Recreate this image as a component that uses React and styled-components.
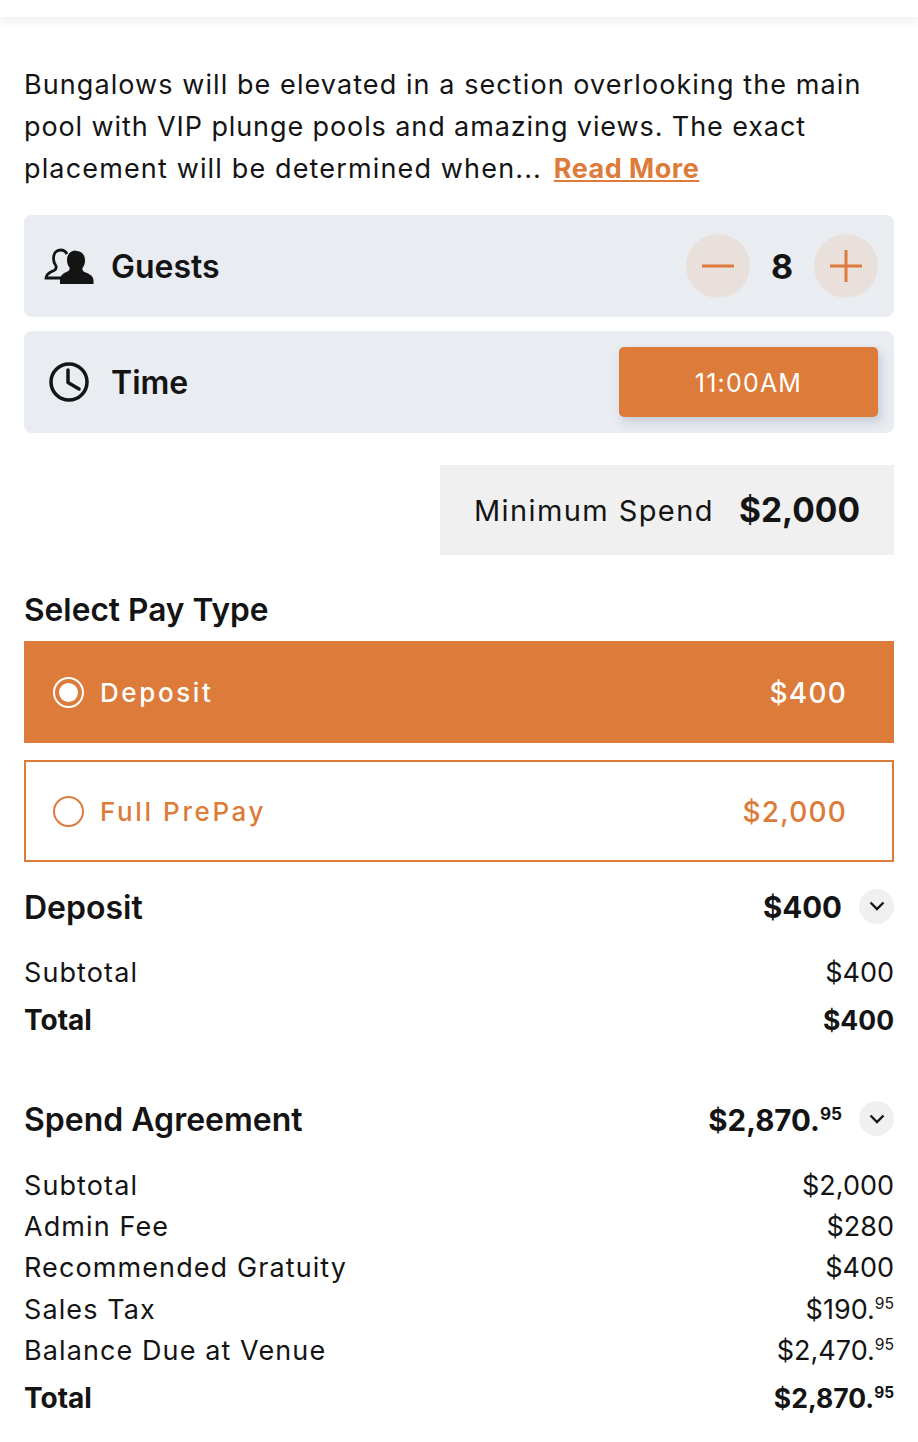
import styled, { createGlobalStyle } from "styled-components";

const orange = "#dd7b3a";
const ink = "#141414";

const Global = createGlobalStyle`
  html, body { margin: 0; padding: 0; background: #fff; }
  body { font-family: Inter, "Noto Sans", "Liberation Sans", sans-serif; color: ${ink}; }
  * { box-sizing: border-box; }
`;

const Page = styled.div`
  width: 918px;
  height: 1442px;
  overflow: hidden;
`;
const TopBar = styled.div`
  height: 17px;
  background: #fff;
  box-shadow: 0 5px 10px rgba(0, 0, 0, 0.06);
`;
const Content = styled.div`
  padding: 47px 24px 0;
`;
const Intro = styled.p`
  margin: 0;
  font-size: 27px;
  line-height: 42px;
  white-space: nowrap;
  a {
    margin-left: 3px;
    color: ${orange};
    font-weight: 700;
    letter-spacing: 0.5px;
    text-decoration: underline;
  }
`;
const IntroLine = styled.span`
  display: block;
  letter-spacing: ${(p) => p.$spacing}px;
`;
const Row = styled.div`
  height: 102px;
  margin-top: ${(p) => p.$top}px;
  padding: 0 16px 0 20px;
  display: flex;
  align-items: center;
  justify-content: space-between;
  background: #e9ecf1;
  border-radius: 8px;
`;
const RowLabel = styled.div`
  display: flex;
  align-items: center;
  gap: 17px;
  font-size: 32px;
  font-weight: 600;
`;
const IconSlot = styled.div`
  width: 50px;
  display: flex;
  justify-content: center;
  svg {
    display: block;
  }
`;
const Stepper = styled.div`
  display: flex;
  align-items: center;
  font-size: 34px;
  font-weight: 700;
  span {
    width: 64px;
    text-align: center;
  }
`;
const RoundBtn = styled.div`
  width: 64px;
  height: 64px;
  border-radius: 50%;
  background: #e9e0dc;
  display: flex;
  align-items: center;
  justify-content: center;
`;
const TimeBtn = styled.div`
  width: 259px;
  height: 70px;
  padding-top: 1px;
  display: flex;
  align-items: center;
  justify-content: center;
  background: ${orange};
  color: #fff;
  border-radius: 5px;
  font-size: 25px;
  letter-spacing: 1.2px;
  box-shadow: 3px 5px 10px rgba(90, 110, 140, 0.25);
`;
const MinSpend = styled.div`
  width: 454px;
  height: 90px;
  margin: 32px 0 0 auto;
  padding: 0 34px;
  display: flex;
  align-items: center;
  justify-content: space-between;
  background: #f0f0f0;
  font-size: 29px;
  letter-spacing: 1.4px;
  strong {
    font-size: 33.5px;
    font-weight: 700;
    letter-spacing: 0;
  }
`;
const SectionTitle = styled.h2`
  margin: 35px 0 11px;
  font-size: 31.7px;
  line-height: 40px;
  font-weight: 600;
`;
const PayOption = styled.div`
  height: 102px;
  margin-bottom: 17px;
  padding: 1px ${(p) => (p.$active ? 47 : 45)}px 0 ${(p) => (p.$active ? 29 : 27)}px;
  display: flex;
  align-items: center;
  justify-content: space-between;
  background: ${(p) => (p.$active ? orange : "#fff")};
  color: ${(p) => (p.$active ? "#fff" : orange)};
  border: ${(p) => (p.$active ? "none" : `2px solid ${orange}`)};
  font-size: 28px;
  font-weight: 500;
  letter-spacing: 1.2px;
`;
const PayName = styled.div`
  display: flex;
  align-items: center;
  gap: 16px;
  margin-top: -1px;
  font-size: 26px;
  font-weight: 500;
  letter-spacing: 2.6px;
`;
const Radio = styled.div`
  width: 31px;
  height: 31px;
  border-radius: 50%;
  border: 2px solid currentColor;
  padding: 4px;
  &::after {
    content: "";
    display: ${(p) => (p.$on ? "block" : "none")};
    width: 100%;
    height: 100%;
    border-radius: 50%;
    background: currentColor;
  }
`;
const SummaryHead = styled.div`
  height: 40px;
  margin-top: ${(p) => p.$top}px;
  margin-bottom: 25px;
  display: flex;
  align-items: center;
  justify-content: space-between;
  font-size: 32px;
  font-weight: 600;
`;
const HeadAmount = styled.div`
  display: flex;
  align-items: center;
  gap: 17px;
  font-size: 29.5px;
  font-weight: 700;
`;
const Chevron = styled.div`
  width: 35px;
  height: 35px;
  border-radius: 50%;
  background: #f0f0f0;
  display: flex;
  align-items: center;
  justify-content: center;
  margin-top: -2px;
`;
const Line = styled.div`
  height: 41.3px;
  display: flex;
  align-items: center;
  justify-content: space-between;
  font-size: 27px;
  letter-spacing: 1.1px;
`;
const TotalLine = styled(Line)`
  margin-top: 6px;
  font-size: 28px;
  font-weight: 700;
  letter-spacing: 0;
`;
const Amount = styled.div`
  font-size: ${(p) => (p.$small ? 26.5 : 27)}px;
  letter-spacing: 0;
`;
const Cents = styled.sup`
  font-size: 0.58em;
  line-height: 0;
  vertical-align: baseline;
  position: relative;
  top: -0.62em;
`;

const Money = ({ v, c, small }) => (
  <Amount $small={small}>
    {v}
    {c && <Cents>{c}</Cents>}
  </Amount>
);

const GuestsIcon = () => (
  <svg width="50" height="36" viewBox="0 0 50 36">
    <path
      d="M18 30H2c0-4 4-6 8-7.500 2-1 2.500-2.500 2-4.500-1.500-2-2.500-4-2.500-7.500C9.500 5 12.500 2 16.500 2c2.500 0 5 1 6.500 4"
      fill="none"
      stroke={ink}
      strokeWidth="2.800"
    />
    <path
      d="M32 2.500c-5.500 0-9 3.500-9 9.500 0 3 1 5.500 2.500 7.500 .5 2-.5 3.500-3 4.500-3.500 1.500-6.500 3.500-6.500 8v4h33.500v-3.500c0-4-3.500-6.500-8-8-2.500-1-3.500-2.500-3-4.500 1.500-2 2.500-4.500 2.500-7.500 0-6-3.500-9.500-9-9.500z"
      fill={ink}
    />
  </svg>
);

const ClockIcon = () => (
  <svg width="40" height="40" viewBox="0 0 40 40" fill="none" stroke={ink} strokeWidth="3.500" strokeLinecap="round" strokeLinejoin="round">
    <circle cx="20" cy="20" r="18" />
    <path d="M19 8v12.500l11 6.500" />
  </svg>
);

const MinusIcon = () => (
  <svg width="32" height="32" viewBox="0 0 32 32">
    <rect y="14.500" width="32" height="3" fill={orange} />
  </svg>
);

const PlusIcon = () => (
  <svg width="32" height="32" viewBox="0 0 32 32">
    <rect y="14.500" width="32" height="3" fill={orange} />
    <rect x="14.500" width="3" height="32" fill={orange} />
  </svg>
);

const ChevronIcon = () => (
  <svg width="16" height="10" viewBox="0 0 16 10" fill="none" stroke={ink} strokeWidth="2.400">
    <path d="M1.500 1.500L8 8l6.500-6.500" />
  </svg>
);

const App = () => {
  return (
    <Page>
      <Global />
      <TopBar />
      <Content>
        <Intro>
          <IntroLine $spacing={1.08}>Bungalows will be elevated in a section overlooking the main</IntroLine>
          <IntroLine $spacing={0.9}>pool with VIP plunge pools and amazing views. The exact</IntroLine>
          <IntroLine $spacing={1.15}>
            placement will be determined when... <a href="#more">Read More</a>
          </IntroLine>
        </Intro>
        <Row $top={25}>
          <RowLabel>
            <IconSlot>
              <GuestsIcon />
            </IconSlot>
            Guests
          </RowLabel>
          <Stepper>
            <RoundBtn>
              <MinusIcon />
            </RoundBtn>
            <span>8</span>
            <RoundBtn>
              <PlusIcon />
            </RoundBtn>
          </Stepper>
        </Row>
        <Row $top={14}>
          <RowLabel>
            <IconSlot>
              <ClockIcon />
            </IconSlot>
            Time
          </RowLabel>
          <TimeBtn>11:00AM</TimeBtn>
        </Row>
        <MinSpend>
          Minimum Spend
          <strong>$2,000</strong>
        </MinSpend>
        <SectionTitle>Select Pay Type</SectionTitle>
        <PayOption $active>
          <PayName>
            <Radio $on />
            Deposit
          </PayName>
          <div>$400</div>
        </PayOption>
        <PayOption>
          <PayName>
            <Radio />
            Full PrePay
          </PayName>
          <div>$2,000</div>
        </PayOption>
        <SummaryHead $top={25}>
          Deposit
          <HeadAmount>
            <div>$400</div>
            <Chevron>
              <ChevronIcon />
            </Chevron>
          </HeadAmount>
        </SummaryHead>
        <Line>
          Subtotal
          <Money v="$400" />
        </Line>
        <TotalLine>
          Total
          <Money v="$400" small />
        </TotalLine>
        <SummaryHead $top={59}>
          Spend Agreement
          <HeadAmount>
            <div>
              $2,870.<Cents>95</Cents>
            </div>
            <Chevron>
              <ChevronIcon />
            </Chevron>
          </HeadAmount>
        </SummaryHead>
        <Line>
          Subtotal
          <Money v="$2,000" />
        </Line>
        <Line>
          Admin Fee
          <Money v="$280" />
        </Line>
        <Line>
          Recommended Gratuity
          <Money v="$400" />
        </Line>
        <Line>
          Sales Tax
          <Money v="$190." c="95" />
        </Line>
        <Line>
          Balance Due at Venue
          <Money v="$2,470." c="95" />
        </Line>
        <TotalLine>
          Total
          <Money v="$2,870." c="95" small />
        </TotalLine>
      </Content>
    </Page>
  );
};

export default App;
